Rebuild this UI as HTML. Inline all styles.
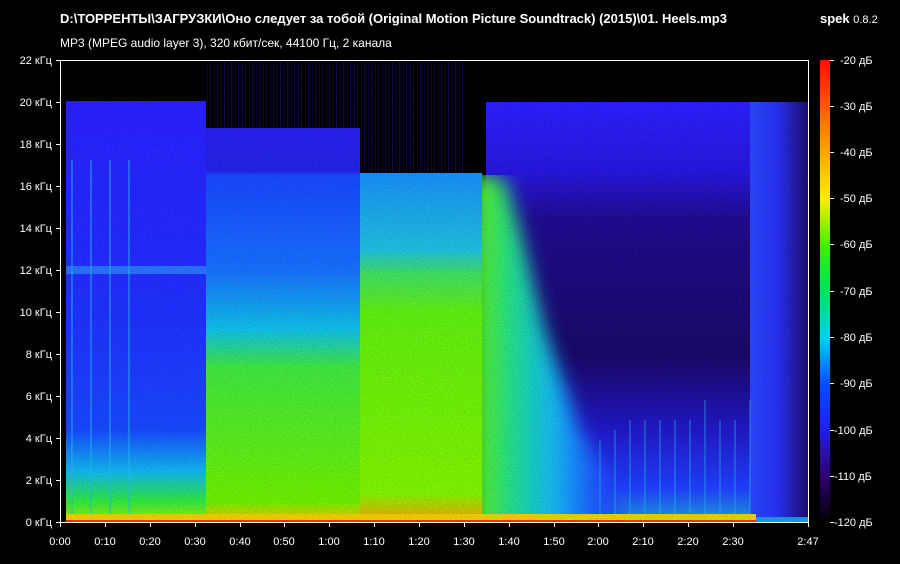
<!DOCTYPE html>
<html><head><meta charset="utf-8"><style>
html,body{margin:0;padding:0;background:#000;width:900px;height:564px;overflow:hidden}
svg{display:block}
text{font-family:"Liberation Sans",sans-serif;fill:#fff}
</style></head><body>
<svg width="900" height="564" viewBox="0 0 900 564" xmlns="http://www.w3.org/2000/svg">
<defs>
<clipPath id="pc"><rect x="480" y="175" width="328" height="339"/></clipPath>
<linearGradient id="cb" x1="0" y1="0" x2="0" y2="1">
<stop offset="0" stop-color="#ff1000"/>
<stop offset="0.15" stop-color="#ff8000"/>
<stop offset="0.3" stop-color="#ffee00"/>
<stop offset="0.4" stop-color="#40f000"/>
<stop offset="0.5" stop-color="#00e060"/>
<stop offset="0.6" stop-color="#00d0f0"/>
<stop offset="0.7" stop-color="#0050ff"/>
<stop offset="0.8" stop-color="#2020e0"/>
<stop offset="0.9" stop-color="#300070"/>
<stop offset="1" stop-color="#000000"/>
</linearGradient>
<linearGradient id="a" x1="0" y1="0" x2="0" y2="1">
<stop offset="0" stop-color="#2a20ff"/>
<stop offset="0.5" stop-color="#2030ff"/>
<stop offset="0.78" stop-color="#1848ff"/>
<stop offset="0.88" stop-color="#10b8f0"/>
<stop offset="0.95" stop-color="#30e840"/>
<stop offset="1" stop-color="#a0f000"/>
</linearGradient>
<linearGradient id="b" x1="0" y1="0" x2="0" y2="1">
<stop offset="0" stop-color="#2820f0"/>
<stop offset="0.11" stop-color="#2424e8"/>
<stop offset="0.12" stop-color="#1848ff"/>
<stop offset="0.36" stop-color="#1870ff"/>
<stop offset="0.51" stop-color="#10c0e8"/>
<stop offset="0.61" stop-color="#40e840"/>
<stop offset="0.95" stop-color="#70f000"/>
<stop offset="1" stop-color="#ffc000"/>
</linearGradient>
<linearGradient id="c" x1="0" y1="0" x2="0" y2="1">
<stop offset="0" stop-color="#1890f8"/>
<stop offset="0.22" stop-color="#20c0e0"/>
<stop offset="0.29" stop-color="#40e060"/>
<stop offset="0.4" stop-color="#60f010"/>
<stop offset="0.92" stop-color="#80f400"/>
<stop offset="1" stop-color="#ffa000"/>
</linearGradient>
<linearGradient id="d" x1="0" y1="0" x2="0" y2="1">
<stop offset="0" stop-color="#2a20ff"/>
<stop offset="0.16" stop-color="#2818e0"/>
<stop offset="0.28" stop-color="#200c90"/>
<stop offset="0.6" stop-color="#1a0868"/>
<stop offset="0.78" stop-color="#2218c8"/>
<stop offset="0.92" stop-color="#2040ff"/>
<stop offset="1" stop-color="#20a0e0"/>
</linearGradient>
<linearGradient id="e" x1="0" y1="0" x2="1" y2="0">
<stop offset="0" stop-color="#2848ff"/>
<stop offset="0.5" stop-color="#2830f0"/>
<stop offset="1" stop-color="#1c0c70"/>
</linearGradient>
<linearGradient id="s" x1="0" y1="0" x2="1" y2="0">
<stop offset="0" stop-color="#60f000"/>
<stop offset="0.25" stop-color="#20e090"/>
<stop offset="0.5" stop-color="#10b8f8"/>
<stop offset="0.75" stop-color="#2050ff"/>
<stop offset="1" stop-color="#2020e0" stop-opacity="0"/>
</linearGradient>
<filter id="bl" x="-20%" y="-20%" width="140%" height="140%"><feGaussianBlur stdDeviation="9"/></filter>
<filter id="n"><feTurbulence type="fractalNoise" baseFrequency="0.9" numOctaves="1" seed="3"/><feColorMatrix values="0 0 0 0 0  0 0 0 0 0  0 0 0 0 0  0 0 0 1.2 -0.5"/></filter>
<pattern id="vl" width="7" height="10" patternUnits="userSpaceOnUse"><rect x="0" y="0" width="1" height="10" fill="#3010a0"/><rect x="4" y="0" width="1" height="10" fill="#200870"/></pattern>
</defs>
<text x="60" y="23" font-size="13" font-weight="bold">D:\ТОРРЕНТЫ\ЗАГРУЗКИ\Оно следует за тобой (Original Motion Picture Soundtrack) (2015)\01. Heels.mp3</text>
<text x="60" y="47" font-size="12">MP3 (MPEG audio layer 3), 320 кбит/сек, 44100 Гц, 2 канала</text>
<text x="820" y="23" font-size="13" font-weight="bold">spek <tspan font-weight="normal" font-size="11">0.8.2</tspan></text>

<rect x="206" y="62" width="260" height="120" fill="url(#vl)" opacity="0.45"/>
<rect x="66" y="101" width="140" height="421" fill="url(#a)"/>
<rect x="66" y="266" width="140" height="8" fill="#30a0ff" opacity="0.6"/>
<g stroke="#20c0f0" stroke-width="1.5" opacity="0.6"><path d="M72 160v360M91 160v360M110 160v360M129 160v360"/></g>
<rect x="206" y="128" width="154" height="394" fill="url(#b)"/>
<rect x="486" y="102" width="322" height="420" fill="url(#d)"/>
<rect x="750" y="102" width="58" height="415" fill="url(#e)"/>
<g clip-path="url(#pc)"><polygon points="470,170 505,180 520,230 545,330 580,430 620,500 640,540 470,540" fill="url(#s)" filter="url(#bl)"/></g>
<rect x="360" y="173" width="122" height="349" fill="url(#c)"/>
<g stroke="#20c0f0" stroke-width="1.5" opacity="0.45"><path d="M600 440v75M615 430v85M630 420v95M645 420v95M660 420v95M675 420v95M690 420v95M705 400v115M720 420v95M735 420v95M750 400v115"/></g>
<rect x="66" y="514" width="690" height="8" fill="#f0d000"/>
<rect x="66" y="520" width="690" height="2" fill="#ff3000"/>
<rect x="66" y="101" width="742" height="421" filter="url(#n)" opacity="0.35"/>
<rect x="61" y="61" width="5" height="461" fill="#000"/>

<rect x="60.5" y="60.5" width="748" height="462" fill="none" stroke="#fff"/>
<g font-size="11" text-anchor="end">
<text x="52" y="64">22 кГц</text><text x="52" y="106">20 кГц</text><text x="52" y="148">18 кГц</text>
<text x="52" y="190">16 кГц</text><text x="52" y="232">14 кГц</text><text x="52" y="274">12 кГц</text>
<text x="52" y="316">10 кГц</text><text x="52" y="358">8 кГц</text><text x="52" y="400">6 кГц</text>
<text x="52" y="442">4 кГц</text><text x="52" y="484">2 кГц</text><text x="52" y="526">0 кГц</text>
</g>
<g stroke="#fff">
<path d="M56 60.5h4M56 102.5h4M56 144.5h4M56 186.5h4M56 228.5h4M56 270.5h4M56 312.5h4M56 354.5h4M56 396.5h4M56 438.5h4M56 480.5h4M56 522.5h4"/>
<path d="M60.5 523v4M105.5 523v4M150.5 523v4M195.5 523v4M240.5 523v4M284.5 523v4M329.5 523v4M374.5 523v4M419.5 523v4M464.5 523v4M509.5 523v4M554.5 523v4M598.5 523v4M643.5 523v4M688.5 523v4M733.5 523v4M808.5 523v4"/>
<path d="M830 60.5h4M830 106.5h4M830 152.5h4M830 198.5h4M830 244.5h4M830 291.5h4M830 337.5h4M830 383.5h4M830 430.5h4M830 476.5h4M830 522.5h4"/>
</g>
<g font-size="11" text-anchor="middle">
<text x="60" y="545">0:00</text><text x="105" y="545">0:10</text><text x="150" y="545">0:20</text>
<text x="195" y="545">0:30</text><text x="240" y="545">0:40</text><text x="284" y="545">0:50</text>
<text x="329" y="545">1:00</text><text x="374" y="545">1:10</text><text x="419" y="545">1:20</text>
<text x="464" y="545">1:30</text><text x="509" y="545">1:40</text><text x="554" y="545">1:50</text>
<text x="598" y="545">2:00</text><text x="643" y="545">2:10</text><text x="688" y="545">2:20</text>
<text x="733" y="545">2:30</text><text x="808" y="545">2:47</text>
</g>
<rect x="820" y="60" width="10" height="463" fill="url(#cb)"/>
<g font-size="11">
<text x="840" y="64">-20 дБ</text><text x="840" y="110">-30 дБ</text><text x="840" y="156">-40 дБ</text>
<text x="840" y="202">-50 дБ</text><text x="840" y="248">-60 дБ</text><text x="840" y="295">-70 дБ</text>
<text x="840" y="341">-80 дБ</text><text x="840" y="387">-90 дБ</text><text x="834" y="434">-100 дБ</text>
<text x="834" y="480">-110 дБ</text><text x="834" y="526">-120 дБ</text>
</g>
</svg>
</body></html>
